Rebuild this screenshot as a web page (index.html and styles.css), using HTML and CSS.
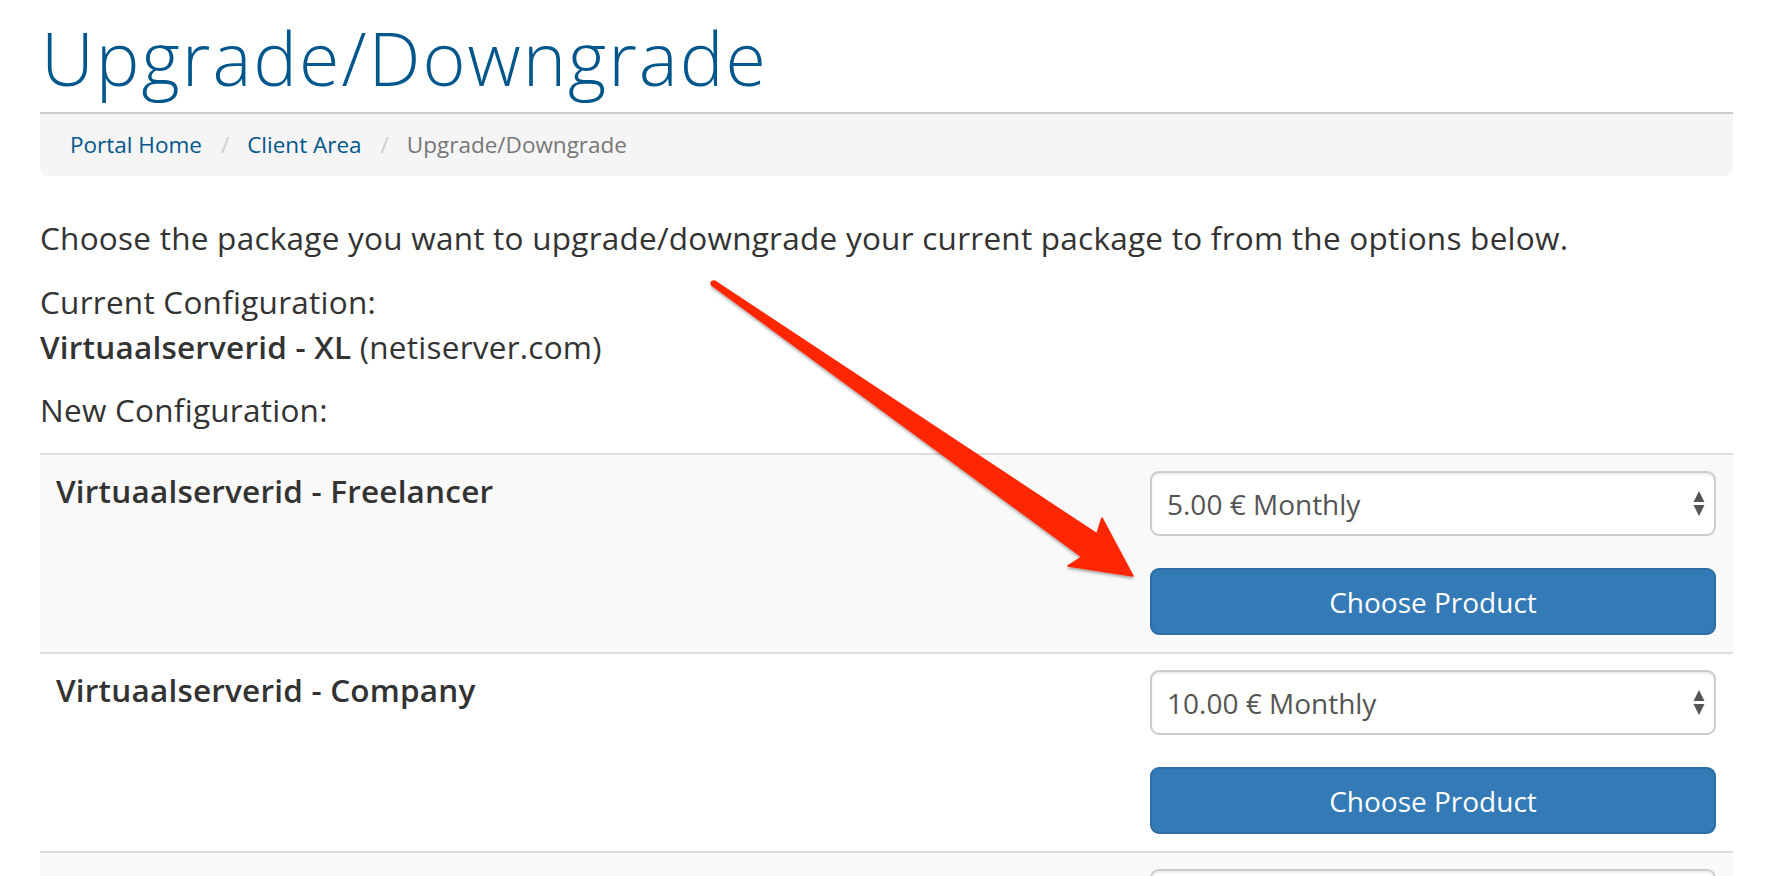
FILE: index.html
```html
<!DOCTYPE html>
<html lang="en">
<head>
<meta charset="utf-8">
<title>Upgrade/Downgrade</title>
<link rel="stylesheet" href="styles.css">
</head>
<body>
<div class="page">
  <div class="header-lined">
    <h1>Upgrade/Downgrade</h1>
    <ol class="breadcrumb">
      <li><a href="#">Portal Home</a></li>
      <li class="sep">/</li>
      <li><a href="#">Client Area</a></li>
      <li class="sep">/</li>
      <li class="active">Upgrade/Downgrade</li>
    </ol>
  </div>

  <p class="text">Choose the package you want to upgrade/downgrade your current package to from the options below.</p>
  <p class="text">Current Configuration:<br><strong>Virtuaalserverid - XL</strong> (netiserver.com)</p>
  <p class="text">New Configuration:</p>

  <div class="products">
    <div class="product striped">
      <div class="product-name">Virtuaalserverid - Freelancer</div>
      <div class="product-actions">
        <div class="select"><span>5.00 € Monthly</span>
          <svg class="select-arrows" width="12" height="26" viewBox="0 0 12 26"><path d="M6 0 L11.5 11 L0.5 11 Z M0.5 14 L11.5 14 L6 25 Z" fill="#555"/></svg>
        </div>
        <button class="btn">Choose Product</button>
      </div>
    </div>
    <div class="product">
      <div class="product-name">Virtuaalserverid - Company</div>
      <div class="product-actions">
        <div class="select"><span>10.00 € Monthly</span>
          <svg class="select-arrows" width="12" height="26" viewBox="0 0 12 26"><path d="M6 0 L11.5 11 L0.5 11 Z M0.5 14 L11.5 14 L6 25 Z" fill="#555"/></svg>
        </div>
        <button class="btn">Choose Product</button>
      </div>
    </div>
    <div class="product striped">
      <div class="product-name">Virtuaalserverid - Business</div>
      <div class="product-actions">
        <div class="select"><span>20.00 € Monthly</span>
          <svg class="select-arrows" width="12" height="26" viewBox="0 0 12 26"><path d="M6 0 L11.5 11 L0.5 11 Z M0.5 14 L11.5 14 L6 25 Z" fill="#555"/></svg>
        </div>
        <button class="btn">Choose Product</button>
      </div>
    </div>
  </div>
</div>

<svg class="annotation" width="1788" height="876" viewBox="0 0 1788 876">
  <defs>
    <filter id="shadow" x="-10%" y="-10%" width="120%" height="120%">
      <feDropShadow dx="0" dy="2" stdDeviation="1.6" flood-color="#000" flood-opacity="0.35"/>
    </filter>
  </defs>
  <polygon filter="url(#shadow)" fill="#ff2600" stroke="#ff2600" stroke-width="1.5" stroke-linejoin="round"
    points="714.4,281 1097,534 1102,518 1133,576 1068,566 1082,557 711.6,285"/>
  <circle cx="713" cy="283" r="2.6" fill="#ff2600"/>
</svg>
</body>
</html>
```
FILE: styles.css
```css
html, body {
  margin: 0;
  padding: 0;
  background: #ffffff;
}

body {
  font-family: "Open Sans", "DejaVu Sans", sans-serif;
  color: #333333;
  font-size: 31.5px;
  line-height: 45px;
  overflow: hidden;
}

.page {
  width: 1693px;
  padding: 0 55px 0 40px;
}

.header-lined h1 {
  margin: 0;
  padding: 17px 0 14px 1px;
  font-size: 73.5px;
  line-height: 81px;
  font-weight: 300;
  letter-spacing: 2px;
  color: #01568b;
  border-bottom: 2px solid #cccccc;
}

.breadcrumb {
  list-style: none;
  margin: 0;
  padding: 15px 30px;
  background: #f5f5f5;
  border-radius: 0 0 9px 9px;
  display: flex;
  align-items: baseline;
  font-size: 22.5px;
  line-height: 32px;
}

.breadcrumb a {
  color: #01568b;
  text-decoration: none;
}

.breadcrumb .sep {
  color: #cccccc;
  padding: 0 18px 0 19px;
}

.breadcrumb .active {
  color: #777777;
}

.text {
  margin: 0 0 18.5px 0;
  letter-spacing: 0.25px;
}

.text:first-of-type {
  margin-top: 39px;
}

.text strong {
  font-weight: 600;
  letter-spacing: 0.2px;
}

.products {
  margin-top: 21px;
}

.product {
  display: flex;
  justify-content: space-between;
  border-top: 2px solid #dddddd;
}

.product.striped {
  background: #f9f9f9;
}

.product-name {
  padding: 13px 16px;
  font-weight: 600;
  letter-spacing: 0.2px;
}

.product-actions {
  width: 566px;
  padding: 16px 17px 17px 0;
  display: flex;
  flex-direction: column;
  gap: 32px;
}

.select {
  height: 65px;
  box-sizing: border-box;
  border: 2px solid #cccccc;
  border-radius: 9px;
  background: #ffffff;
  box-shadow: inset 0 2px 2px rgba(0, 0, 0, 0.075);
  padding: 0 9px 0 15px;
  display: flex;
  align-items: center;
  justify-content: space-between;
  font-size: 28px;
  line-height: 38px;
  color: #555555;
}

.select-arrows {
  display: block;
}

.btn {
  height: 67px;
  box-sizing: border-box;
  border: 2px solid #2e6da4;
  border-radius: 9px;
  background: #337ab7;
  color: #ffffff;
  font-family: "Open Sans", "DejaVu Sans", sans-serif;
  font-size: 28px;
  line-height: 38px;
  padding: 0;
  cursor: pointer;
}

.annotation {
  position: absolute;
  top: 0;
  left: 0;
  pointer-events: none;
}
```
